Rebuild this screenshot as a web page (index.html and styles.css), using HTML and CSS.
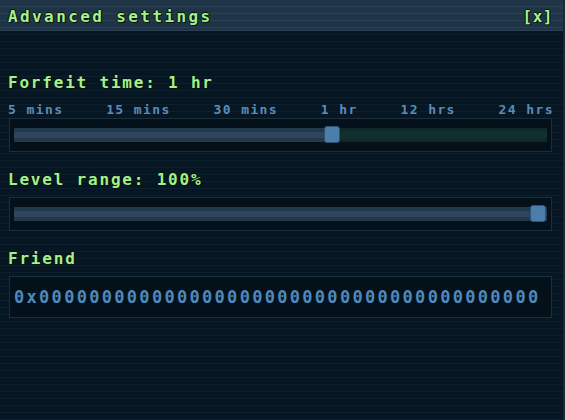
FILE: index.html
```html
<!DOCTYPE html>
<html lang="en">
<head>
  <meta charset="UTF-8">
  <meta name="viewport" content="width=device-width, initial-scale=1.0">
  <title>Advanced settings</title>
  <link rel="stylesheet" href="styles.css">
</head>
<body>
  <div class="panel">
    <div class="header">
      <div class="title">Advanced settings</div>
      <div class="close">[x]</div>
    </div>

    <div class="content">
      <div class="label">Forfeit time: 1 hr</div>
      <div class="ticks">
        <span>5 mins</span>
        <span>15 mins</span>
        <span>30 mins</span>
        <span>1 hr</span>
        <span>12 hrs</span>
        <span>24 hrs</span>
      </div>
      <div class="slider">
        <div class="track track-rest">
          <div class="fill" style="width: calc(60% - 1.6px)"></div>
          <div class="thumb" style="left: calc(60% - 9.6px)"></div>
        </div>
      </div>

      <div class="label label-gap">Level range: 100%</div>
      <div class="slider slider-gap">
        <div class="track">
          <div class="fill" style="width: 100%"></div>
          <div class="thumb" style="left: calc(100% - 17px)"></div>
        </div>
      </div>

      <div class="label label-gap">Friend</div>
      <div class="address">0x0000000000000000000000000000000000000000</div>
    </div>
  </div>
</body>
</html>
```

FILE: styles.css
```css
html, body {
  margin: 0;
  padding: 0;
  height: 100%;
}
body {
  font-family: "DejaVu Sans Mono", "Liberation Mono", monospace;
  font-weight: bold;
  background-color: #061622;
  background-image: repeating-linear-gradient(to bottom, transparent 0, transparent 6px, #0b1f2c 6px, #0b1f2c 7px);
  overflow: hidden;
}
.panel {
  height: 420px;
  border-right: 2px solid #1a2b38;
  box-sizing: border-box;
}
.header {
  height: 31px;
  display: flex;
  align-items: center;
  justify-content: space-between;
  padding: 2px 10px 0 8px;
  background-color: #1f3447;
  background-image: repeating-linear-gradient(to bottom, transparent 0, transparent 6px, #2a4054 6px, #2a4054 7px);
  border-bottom: 1px solid #2b4053;
  box-sizing: border-box;
}
.title, .close, .label {
  color: #a4ef8e;
  font-size: 16px;
  letter-spacing: 2.4px;
  text-shadow: 1px 1px 0 #08140c, -1px 0 0 #08140c, 0 -1px 0 #08140c, 1px 0 0 #08140c;
}
.close {
  letter-spacing: 0.5px;
}
.content {
  padding: 43px 9px 0 8px;
}
.label {
  line-height: 18px;
  letter-spacing: 1.8px;
}
.label-gap {
  margin-top: 19px;
}
.ticks {
  display: flex;
  justify-content: space-between;
  margin-top: 11px;
  font-size: 13px;
  line-height: 14px;
  letter-spacing: 1.4px;
  color: #5a8cbb;
}
.slider {
  margin: 1px 2px 0 1px;
  padding: 9px 4px;
  border: 1px solid #1b2e3c;
  background-color: #04111b;
}
.slider-gap {
  margin-top: 8px;
}
.track {
  position: relative;
  height: 14px;
  background: #0f2b2b;
}
.track-rest {
  background: linear-gradient(to bottom, #0d2626 0, #12302f 5px, #12302f 9px, #0d2626 14px);
}
.fill {
  height: 14px;
  background: linear-gradient(to bottom, #22384c 0, #22384c 4px, #2e455b 4px, #2e455b 10px, #22384c 10px);
}
.thumb {
  position: absolute;
  top: -2px;
  width: 14px;
  height: 15px;
  background-color: #4b7eaa;
  border: 1px solid #2e5375;
  border-radius: 3px;
}
.address {
  margin: 8px 2px 0 1px;
  height: 42px;
  box-sizing: border-box;
  display: flex;
  align-items: center;
  padding: 0 4px;
  border: 1px solid #1b2e3c;
  background-color: #04111b;
  color: #4f88ba;
  font-size: 17px;
  letter-spacing: 2.3px;
  white-space: nowrap;
  overflow: hidden;
}
```
